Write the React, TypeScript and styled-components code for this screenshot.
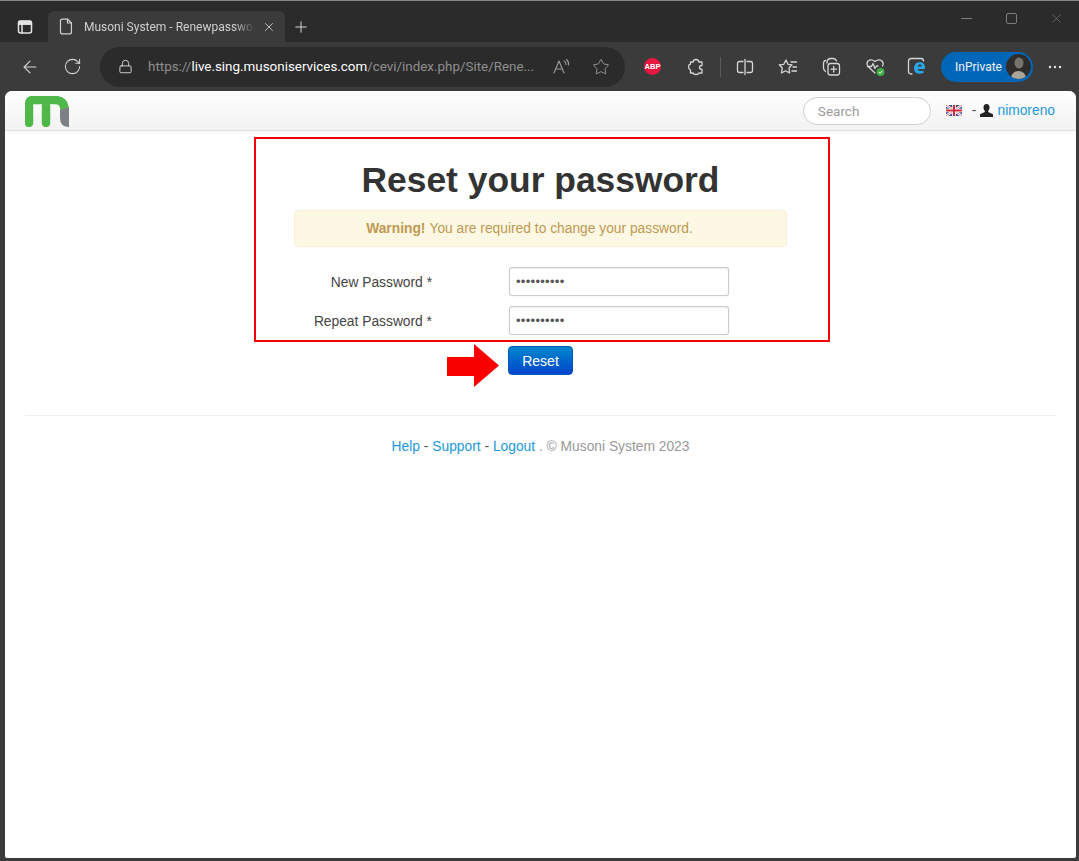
import { createGlobalStyle, styled } from "styled-components";
import { ArrowLeft, Lock, Plus, RotateCw, Star, X } from "lucide-react";

const GlobalStyle = createGlobalStyle`
  html, body {
    margin: 0;
    padding: 0;
    background: #3b3b3b;
  }
`;

const Window = styled.div`
  width: 1079px;
  height: 861px;
  box-sizing: border-box;
  overflow: hidden;

  display: flex;
  flex-direction: column;

  background: #3b3b3b;
  border-top: 1px solid #8a8a8a;
  font-family: Roboto, "Liberation Sans", sans-serif;
`;

const TitleBar = styled.div`
  height: 41px;
  flex: none;
  padding-left: 6px;

  display: flex;
  align-items: flex-end;

  background: #2b2b2b;
`;

const TabActions = styled.div`
  width: 38px;
  height: 31px;
  margin-right: 4px;

  display: flex;
  align-items: center;
  justify-content: center;

  color: #e4e4e4;
`;

const Tab = styled.div`
  width: 237px;
  height: 31px;
  box-sizing: border-box;
  padding: 0 9px 0 11px;

  display: flex;
  align-items: center;

  background: #3b3b3b;
  border-radius: 6px 6px 0 0;
  color: #d0d0d0;
`;

const TabTitle = styled.span`
  width: 172px;
  margin: 0 7px 0 11px;
  overflow: hidden;

  color: #cfcfcf;
  font-size: 12px;
  white-space: nowrap;
  mask-image: linear-gradient(to right, #000 88%, transparent 100%);
`;

const NewTab = styled.div`
  width: 32px;
  height: 31px;

  display: flex;
  align-items: center;
  justify-content: center;

  color: #d8d8d8;
`;

const WindowControls = styled.div`
  margin-left: auto;
  align-self: flex-start;
  padding-top: 6px;

  display: flex;
  color: #7d7d7d;
`;

const WindowControl = styled.div`
  width: 45px;
  height: 22px;

  display: flex;
  align-items: center;
  justify-content: center;
`;

const Toolbar = styled.div`
  height: 49px;
  flex: none;
  padding-left: 8px;

  display: flex;
  align-items: center;
`;

const Slot = styled.div`
  width: 43px;
  height: 40px;
  flex: none;

  display: flex;
  align-items: center;
  justify-content: center;

  color: #d6d6d6;
`;

const AddressBar = styled.div`
  width: 525px;
  height: 40px;
  flex: none;
  box-sizing: border-box;
  margin: 0 6px;
  padding-left: 18px;

  display: flex;
  align-items: center;

  background: #2b2b2b;
  border-radius: 20px;
  color: #d6d6d6;
`;

const Url = styled.div`
  width: 386px;
  margin-left: 15px;
  flex: none;

  color: #8f8f8f;
  font-size: 13.4px;
  white-space: nowrap;

  b {
    color: #ffffff;
    font-weight: 400;
  }
`;

const AddressIcons = styled.div`
  margin-left: 8px;

  display: flex;
  color: #9d9d9d;
`;

const AddressIcon = styled.div`
  width: 39px;
  height: 40px;

  display: flex;
  align-items: center;
  justify-content: center;
`;

const AbpBadge = styled.div`
  width: 17px;
  height: 17px;

  display: flex;
  align-items: center;
  justify-content: center;

  background: #e8173f;
  border-radius: 50%;
  color: #fff;
  font-family: "Liberation Sans", sans-serif;
  font-size: 7.5px;
  font-weight: 700;
`;

const Separator = styled.div`
  width: 1px;
  height: 20px;
  flex: none;
  margin: 0 2px 0 3px;

  background: #5a5a5a;
`;

const PrivatePill = styled.div`
  width: 92px;
  height: 30px;
  flex: none;
  box-sizing: border-box;
  margin-left: 3px;
  padding: 0 2px 0 14px;

  display: flex;
  align-items: center;
  justify-content: space-between;

  background: #0067b8;
  border-radius: 15px;
  color: #f0f0f0;
  font-size: 12px;
`;

const Avatar = styled.div`
  width: 25px;
  height: 25px;
  overflow: hidden;

  background: #2f2d2b;
  border-radius: 50%;
`;

const Viewport = styled.div`
  flex: 1;
  margin: 0 3px 3px 5px;
  overflow: hidden;

  background: #fff;
  border-radius: 7px 7px 2px 2px;
  color: #333;
  font-family: "Liberation Sans", Arial, sans-serif;
  font-size: 13.8px;
`;

const NavBar = styled.div`
  height: 40px;
  box-sizing: border-box;
  padding: 0 21px 0 20px;

  display: flex;
  align-items: center;

  background: linear-gradient(to bottom, #ffffff, #f2f2f2);
  border-bottom: 1px solid #e2e2e2;
  box-shadow: 0 1px 3px rgba(0, 0, 0, 0.05);
`;

const SearchBox = styled.div`
  width: 128px;
  height: 28px;
  box-sizing: border-box;
  margin-left: auto;
  padding-left: 14px;

  display: flex;
  align-items: center;

  background: #fff;
  border: 1px solid #cfcfcf;
  border-radius: 14px;
  color: #9a9a9a;
  font-family: Roboto, "Liberation Sans", sans-serif;
  font-size: 13.5px;
`;

const UserArea = styled.div`
  margin-left: 15px;

  display: flex;
  align-items: center;
  color: #555;
`;

const Dash = styled.span`
  margin: 0 4px 0 10px;
`;

const BlueLink = styled.a`
  color: #2298da;
  text-decoration: none;
`;

const UserLink = styled(BlueLink)`
  margin-left: 4px;
`;

const Content = styled.div`
  display: flex;
  flex-direction: column;
  align-items: center;
`;

const Highlight = styled.div`
  width: 576px;
  height: 205px;
  box-sizing: border-box;
  margin: 6px 0 0 3px;
  padding: 21px 41px 0 38px;

  display: flex;
  flex-direction: column;
  align-items: center;

  border: 2px solid #f40000;
`;

const Heading = styled.h1`
  margin: 0 0 10px;

  color: #333;
  font-size: 35.4px;
  font-weight: 700;
  line-height: 40px;
  text-align: center;
`;

const Alert = styled.div`
  width: 493px;
  height: 37px;
  flex: none;
  box-sizing: border-box;
  margin-bottom: 20px;
  padding-right: 22px;

  display: flex;
  align-items: center;
  justify-content: center;
  gap: 4px;

  background: #fcf8e3;
  border: 1px solid #fbeed5;
  border-radius: 4px;
  color: #c09853;
`;

const Fields = styled.div`
  width: 493px;

  display: flex;
  flex-direction: column;
  gap: 10px;
`;

const FieldRow = styled.div`
  display: grid;
  grid-template-columns: 138px 220px;
  column-gap: 77px;
  align-items: center;
`;

const Label = styled.label`
  padding-top: 2px;

  color: #444;
  text-align: right;
`;

const Input = styled.input`
  width: 220px;
  height: 29px;
  box-sizing: border-box;
  padding: 0 6px;

  background: #fff;
  border: 1px solid #cccccc;
  border-radius: 3px;
  box-shadow: inset 0 1px 1px rgba(0, 0, 0, 0.075), 0 0 1px rgba(0, 0, 0, 0.2);
  color: #555;
  font-family: "Liberation Sans", Arial, sans-serif;
  font-size: 13px;
  letter-spacing: 0.3px;
  outline: none;
`;

const ResetArea = styled.div`
  position: relative;
  margin-top: 4px;
`;

const ResetButton = styled.button`
  width: 65px;
  height: 29px;
  display: block;

  background: linear-gradient(to bottom, #0088cc, #0044cc);
  border: 1px solid #0a55b8;
  border-radius: 4px;
  color: #fff;
  font-family: "Liberation Sans", Arial, sans-serif;
  font-size: 14px;
`;

const Arrow = styled.svg`
  position: absolute;
  top: -2px;
  right: 74px;
`;

const Rule = styled.hr`
  width: 1031px;
  margin: 40px 0 0;

  border: 0;
  border-top: 1px solid #eeeeee;
`;

const Footer = styled.div`
  margin-top: 21px;

  color: #999;
  line-height: 20px;
  text-align: center;
`;

const FooterDash = styled.span`
  color: #555;
`;

function Logo() {
  return (
    <svg width="44" height="31" viewBox="0 0 44 31" style={{ marginTop: 1 }}>
      <path
        d="M4 27 V8 Q4 4 8 4 H30 Q39.5 4 39.5 14 M21 27 V10"
        fill="none"
        stroke="#4fb848"
        strokeWidth="8.5"
        strokeLinecap="round"
        strokeLinejoin="round"
      />
      <path d="M35 14 L44 11 V31 Q35 31 35 22 Z" fill="#7d8084" />
    </svg>
  );
}

function UkFlag() {
  return (
    <svg width="16" height="11" viewBox="0 0 16 11">
      <rect width="16" height="11" fill="#3f4f96" />
      <path d="M0 0 L16 11 M16 0 L0 11" stroke="#fff" strokeWidth="2.4" />
      <path d="M0 0 L16 11 M16 0 L0 11" stroke="#d4656f" strokeWidth="0.8" />
      <path d="M8 0 V11 M0 5.5 H16" stroke="#fff" strokeWidth="3.6" />
      <path d="M8 0 V11 M0 5.5 H16" stroke="#cf2b3a" strokeWidth="2" />
    </svg>
  );
}

function PersonIcon() {
  return (
    <svg width="13" height="13" viewBox="0 0 13 13" fill="#222">
      <ellipse cx="6.5" cy="3.6" rx="3" ry="3.6" />
      <path d="M4.8 6.5 H8.2 V8 L13 10.2 V13 H0 V10.2 L4.8 8 Z" />
    </svg>
  );
}

const stroke = {
  fill: "none",
  stroke: "currentColor",
  strokeWidth: 1.3,
  strokeLinecap: "round" as const,
  strokeLinejoin: "round" as const,
};

export default function App() {
  return (
    <>
      <GlobalStyle />
      <Window>
        <TitleBar>
          <TabActions>
            <svg width="16" height="16" viewBox="0 0 16 16" {...stroke} strokeWidth={1.5}>
              <rect x="1.5" y="2" width="13" height="12" rx="2" />
              <path d="M1.5 5 H14.5 M5 5 V14" />
              <path d="M2 2.5 H14 V5 H2 Z" fill="currentColor" />
            </svg>
          </TabActions>
          <Tab>
            <svg width="14" height="17" viewBox="0 0 14 17" {...stroke} strokeWidth={1.2}>
              <path d="M1.5 3 Q1.5 1 3.5 1 H8.5 L12.5 5 V14 Q12.5 16 10.5 16 H3.5 Q1.5 16 1.5 14 Z" />
              <path d="M8.5 1 V5 H12.5" />
            </svg>
            <TabTitle>Musoni System - Renewpassword</TabTitle>
            <X size={14} strokeWidth={1.5} />
          </Tab>
          <NewTab>
            <Plus size={18} strokeWidth={1.3} />
          </NewTab>
          <WindowControls>
            <WindowControl>
              <svg width="11" height="11" viewBox="0 0 11 11" {...stroke} strokeWidth={1}>
                <path d="M0.5 5.5 H10.5" />
              </svg>
            </WindowControl>
            <WindowControl>
              <svg width="11" height="11" viewBox="0 0 11 11" {...stroke} strokeWidth={1}>
                <rect x="0.5" y="0.5" width="10" height="10" rx="1.5" />
              </svg>
            </WindowControl>
            <WindowControl>
              <X size={15} strokeWidth={1} />
            </WindowControl>
          </WindowControls>
        </TitleBar>

        <Toolbar>
          <Slot>
            <ArrowLeft size={20} strokeWidth={1.3} />
          </Slot>
          <Slot>
            <RotateCw size={19} strokeWidth={1.3} />
          </Slot>
          <AddressBar>
            <Lock size={15} strokeWidth={1.5} />
            <Url>
              https://<b>live.sing.musoniservices.com</b>/cevi/index.php/Site/Rene...
            </Url>
            <AddressIcons>
              <AddressIcon>
                <svg width="20" height="18" viewBox="0 0 20 18" {...stroke} strokeWidth={1.1}>
                  <path d="M2 15 L7 3 L12 15 M3.8 11 H10.2" />
                  <path d="M12 3 Q14 4 14 6.5 M14.5 1.5 Q17 3.5 16.5 7" />
                </svg>
              </AddressIcon>
              <AddressIcon>
                <Star size={18} strokeWidth={1.2} />
              </AddressIcon>
            </AddressIcons>
          </AddressBar>
          <Slot>
            <AbpBadge>ABP</AbpBadge>
          </Slot>
          <Slot>
            <svg width="18" height="18" viewBox="0 0 18 18" {...stroke}>
              <path d="M6 4 Q6.5 1.5 9 1.5 Q11.5 1.5 12 4 L15 4 V7.5 Q12.5 7.5 12.5 9.5 Q12.5 11.5 15 11.5 V15 H12 Q11.5 16.5 9 16.5 Q6.5 16.5 6 15 H3.5 V12 Q1.5 11.5 1.5 9 Q1.5 6.5 3.5 6 V4 Z" />
            </svg>
          </Slot>
          <Separator />
          <Slot>
            <svg width="18" height="18" viewBox="0 0 18 18" {...stroke}>
              <path d="M7 3.5 H3.5 Q1.5 3.5 1.5 5.5 V12.5 Q1.5 14.5 3.5 14.5 H7 M11 3.5 H14.5 Q16.5 3.5 16.5 5.5 V12.5 Q16.5 14.5 14.5 14.5 H11" />
              <path d="M9 1.5 V16.5" />
            </svg>
          </Slot>
          <Slot>
            <svg width="20" height="18" viewBox="0 0 20 18" {...stroke}>
              <path d="M8 2 L10 6.3 L14 6.8 L11 10 L11.6 15 L7.5 12.8 L3.5 15 L4.3 10 L1.2 6.8 L5.8 6.3 Z" />
              <path d="M13 4 H18.5 M15 9 H18.5 M14 13 H18.5" />
            </svg>
          </Slot>
          <Slot>
            <svg width="20" height="19" viewBox="0 0 20 19" {...stroke}>
              <rect x="7" y="6.5" width="11.5" height="11.5" rx="2.5" />
              <path d="M12.7 9.5 V15 M10 12.2 H15.5" />
              <path d="M4.5 14.5 Q2.5 13 2.5 11 V6 Q2.5 4 4.5 3.5 M6 6 Q6 2 9 1.5 H12 Q14.5 1.5 15.5 4" />
            </svg>
          </Slot>
          <Slot>
            <svg width="21" height="20" viewBox="0 0 21 20" style={{ marginLeft: 3 }}>
              <path
                {...stroke}
                d="M10 16 L3 9.5 Q1 6.5 3 4 Q6 1.5 10 4.5 Q14 1.5 17 4 Q19 6.5 17.5 9 M2.5 9.5 H6.5 L8 6.5 L10 11.5 L11.5 9 H13"
              />
              <circle cx="15.5" cy="15" r="4" fill="#3fae49" />
              <path d="M13.8 15 L15.1 16.3 L17.3 13.9" fill="none" stroke="#fff" strokeWidth="1" />
            </svg>
          </Slot>
          <Slot>
            <svg width="20" height="19" viewBox="0 0 20 19">
              <path
                {...stroke}
                d="M5 17 H4 Q1.5 17 1.5 14.5 V4 Q1.5 1.5 4 1.5 H14 Q16.5 1.5 16.5 4"
              />
              <path
                d="M7 11 Q7.5 5 13 5 Q18.5 5.5 18 12 H10.5 Q11 15 16.5 13.5 V16 Q7 18.5 7 11 Z M10.5 9.5 H15 Q14.5 7.3 12.8 7.3 Q11 7.5 10.5 9.5 Z"
                fill="#28a8e8"
                fillRule="evenodd"
              />
            </svg>
          </Slot>
          <PrivatePill>
            InPrivate
            <Avatar>
              <svg width="25" height="25" viewBox="0 0 25 25">
                <ellipse cx="13" cy="9" rx="4.5" ry="5.5" fill="#77746e" />
                <ellipse cx="12.5" cy="24" rx="7.5" ry="7" fill="#aaa498" />
              </svg>
            </Avatar>
          </PrivatePill>
          <Slot>
            <svg width="14" height="4" viewBox="0 0 14 4" fill="#e6e6e6">
              <circle cx="2" cy="2" r="1.2" />
              <circle cx="7" cy="2" r="1.2" />
              <circle cx="12" cy="2" r="1.2" />
            </svg>
          </Slot>
        </Toolbar>

        <Viewport>
          <NavBar>
            <Logo />
            <SearchBox>Search</SearchBox>
            <UserArea>
              <UkFlag />
              <Dash>-</Dash>
              <PersonIcon />
              <UserLink href="#">nimoreno</UserLink>
            </UserArea>
          </NavBar>

          <Content>
            <Highlight>
              <Heading>Reset your password</Heading>
              <Alert>
                <strong>Warning!</strong> You are required to change your password.
              </Alert>
              <Fields>
                <FieldRow>
                  <Label>New Password *</Label>
                  <Input type="password" defaultValue="••••••••••" />
                </FieldRow>
                <FieldRow>
                  <Label>Repeat Password *</Label>
                  <Input type="password" defaultValue="••••••••••" />
                </FieldRow>
              </Fields>
            </Highlight>
            <ResetArea>
              <ResetButton>Reset</ResetButton>
              <Arrow width="52" height="43" viewBox="0 0 52 43">
                <path d="M0 13 H27 V0 L52 21.5 L27 43 V32 H0 Z" fill="#fa0000" />
              </Arrow>
            </ResetArea>
            <Rule />
            <Footer>
              <BlueLink href="#">Help</BlueLink> <FooterDash>-</FooterDash>{" "}
              <BlueLink href="#">Support</BlueLink> <FooterDash>-</FooterDash>{" "}
              <BlueLink href="#">Logout</BlueLink> . © Musoni System 2023
            </Footer>
          </Content>
        </Viewport>
      </Window>
    </>
  );
}
